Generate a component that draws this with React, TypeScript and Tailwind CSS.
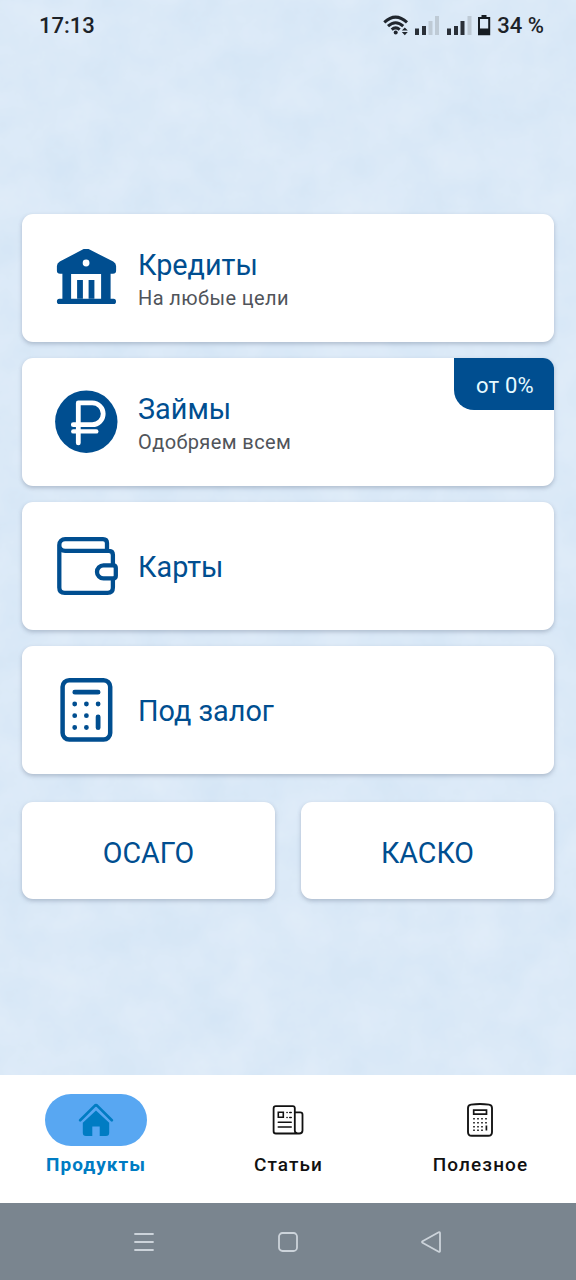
import type { ReactNode } from "react";

function PaperTexture() {
  return (
    <svg className="absolute inset-0 h-full w-full" aria-hidden="true">
      <filter id="paper" x="0" y="0" width="100%" height="100%" colorInterpolationFilters="sRGB">
        <feTurbulence type="fractalNoise" baseFrequency="0.022" numOctaves="5" seed="8" />
        <feColorMatrix values="0.055 0 0 0 0.83  0.032 0 0 0 0.898  0.015 0 0 0 0.962  0 0 0 0 1" />
      </filter>
      <rect width="100%" height="100%" filter="url(#paper)" />
    </svg>
  );
}

function StatusBar() {
  return (
    <header className="flex h-[50px] items-center justify-between pt-0.5 pr-8 pl-[39px] text-[22px] font-medium text-[#1c2228]">
      <span className="leading-none">17:13</span>
      <div className="flex items-center">
        <svg width="115" height="24" viewBox="-1 1 115 24" fill="none">
          <g stroke="#20262e" strokeWidth="3">
            <path d="M1.3 9.4Q12.5-1.2 24 9.4" />
            <path d="M5 13.2q7.6-7 15.2 0" />
            <path d="M8.7 16.6q4-3.5 8 0" />
          </g>
          <circle cx="12.7" cy="19.6" r="2" fill="#20262e" />
          <path d="m21.8 14.4 3 3.2h-6zm0 7.8 3-3.2h-6z" fill="#20262e" />
          <path d="M32 15.5h4V22h-4zM39 13h4v9h-4zM64 15.5h4V22h-4zM71 13h4v9h-4zM77.5 8h4v14h-4z" fill="#2a3038" />
          <path d="M45.5 8h4v14h-4zM52 3h4v19h-4zM84.5 3h4v19h-4z" fill="#becad5" />
          <path d="M98.5 2h5v2h3.7v18.2H95V4h3.5zM97 6v9.5h8.2V6z" fillRule="evenodd" fill="#161c22" />
        </svg>
        <span className="leading-none">34 %</span>
      </div>
    </header>
  );
}

function BankIcon() {
  return (
    <svg width="62" height="58" viewBox="-0.4 1 62 58" fill="#004e90">
      <path
        fillRule="evenodd"
        d="M28.6.8q2.1-1 4.2 0L57.8 13.6q2.9 1.5 2.9 4.5v4.5q0 3.2-3.2 3.2h-2.3v25h3q2.4 0 2.4 2.6T58.2 56H4q-2.5 0-2.5-2.6t2.5-2.6h3v-25H4.7q-3.2 0-3.2-3.2v-4.5q0-3 2.9-4.5zM30.7 11.6a3.4 3.4 0 1 0 0 6.8 3.4 3.4 0 0 0 0-6.8Z"
      />
      <path d="M15.7 26h30v24.8h-30z" fill="#fff" />
      <path d="M21.7 32h5.8v18.8h-5.8zM33.2 32H39v18.8h-5.8z" />
    </svg>
  );
}

function RubleIcon() {
  return (
    <svg width="62" height="62" viewBox="-0.3 0.3 62 62" fill="none" className="overflow-visible">
      <circle cx="31" cy="31" r="31.2" fill="#004e90" />
      <path d="M23 52.2V12.2h14a10.9 10.9 0 0 1 0 21.8H18" stroke="#fff" strokeWidth="4.8" strokeLinecap="round" strokeLinejoin="round" />
      <path d="M18 40.7h23" stroke="#fff" strokeWidth="4.4" strokeLinecap="round" />
    </svg>
  );
}

function WalletIcon() {
  return (
    <svg width="62" height="58" viewBox="-1 0 62 58" fill="none" stroke="#004e90" strokeWidth="4.3" strokeLinejoin="round" className="overflow-visible">
      <path d="M51 14.2V6.1q0-4-4-4H9.2a5.9 5.9 0 0 0-5.9 5.9v42.4q0 5.4 5.4 5.4h42.8q5.4 0 5.4-5.4V41.5M3.3 8a5.9 5.9 0 0 0 5.9 5.9h43.7q4 0 4 4v10.8" />
      <path d="M57.2 28.4H47.5a6.5 6.5 0 0 0 0 13h9.7q2.6 0 2.6-2.6v-7.8q0-2.6-2.6-2.6Z" />
    </svg>
  );
}

function CalculatorIcon() {
  return (
    <svg width="52" height="64" viewBox="-0.4 0 52 64" fill="none" stroke="#004e90" strokeLinecap="round" className="overflow-visible">
      <rect x="2.2" y="2.2" width="47.6" height="59.4" rx="6.6" strokeWidth="4.5" />
      <path d="M14.4 14.2h23.3M37.7 38.8v10.9" strokeWidth="4.8" />
      <path d="M14.3 26h.01M26 26h.01M37.7 26h.01M14.3 37.7h.01M26 37.7h.01M14.3 49.5h.01M26 49.5h.01" strokeWidth="4.8" />
    </svg>
  );
}

interface ProductCardProps {
  icon: ReactNode;
  title: string;
  subtitle?: string;
  badge?: string;
}

function ProductCard({ icon, title, subtitle, badge }: ProductCardProps) {
  return (
    <section className="relative flex h-32 items-center overflow-hidden rounded-[11px] bg-white pl-8 shadow-[0_2px_4px_rgba(65,80,105,0.3)]">
      <div className="flex w-16 shrink-0 items-center justify-center">{icon}</div>
      <div className="pt-0.5 pl-5">
        <h2 className="text-[28.8px] leading-[34px] text-[#004e90]">{title}</h2>
        {subtitle && <p className="mt-1 text-[20px] leading-6 tracking-[0.4px] text-[#50545a]">{subtitle}</p>}
      </div>
      {badge && (
        <span className="absolute top-0 right-0 flex h-[52px] w-[100px] items-center justify-center rounded-bl-[20px] bg-[#004e90] pt-[3px] pl-0.5 text-[22px] tracking-[0.2px] text-[#e6faff]">
          {badge}
        </span>
      )}
    </section>
  );
}

function HomeIcon() {
  return (
    <svg width="36" height="34" viewBox="0 0 36 34" fill="#007cc3">
      <path d="M2.2 17.3 16.4 3.1q1.6-1.6 3.2 0l14.2 14.2" fill="none" stroke="#007cc3" strokeWidth="2.7" strokeLinecap="round" />
      <path d="m18 7.6 13.2 12.2v10q0 3.2-3.2 3.2h-6.3v-9.5h-7.4V33H8q-3.2 0-3.2-3.2v-10z" />
    </svg>
  );
}

function NewsIcon() {
  return (
    <svg width="32" height="30" viewBox="0 0 32 30" fill="none" stroke="#111" strokeWidth="1.8" strokeLinecap="round">
      <path d="M22.8 7.3h5.4q2.3 0 2.3 2.3v15.9q0 3-3.3 3-4.4 0-4.4-3V3.1q0-2-2-2H3.9q-2.3 0-2.3 2.3v22.8q0 2.3 2.3 2.3h23.3" />
      <path d="M6.3 7.3h5v5h-5zM15 7.5h.1M17.8 7.5h1.4M15 12.5h.1M17.8 12.5h1.4M6.3 17.2h12.9M6.3 22h12.9" strokeWidth="1.6" />
    </svg>
  );
}

function SmallCalculatorIcon() {
  return (
    <svg width="26" height="34" viewBox="0 0 26 34" fill="none" stroke="#161616">
      <path d="M1 5q0-3 3-3.4 9-1.2 18 0Q25 2 25 5v24q0 3.8-3.8 3.8H4.8Q1 32.8 1 29z" strokeWidth="1.9" />
      <path d="M6.7 7.2h12.8v4H6.7z" strokeWidth="1.7" />
      <path d="M6.2 15.7h14M6.2 19.7h14M6.2 23.7h10.5M6.2 27.2h10.5" strokeWidth="1.5" strokeDasharray="1.6 2.4" />
      <path d="M19.4 22.5v5" strokeWidth="1.7" />
    </svg>
  );
}

interface NavItemProps {
  icon: ReactNode;
  label: string;
  active?: boolean;
}

function NavItem({ icon, label, active }: NavItemProps) {
  return (
    <a className="flex flex-col items-center pt-[19px]">
      <div className={active ? "flex h-[52px] w-[102px] items-center justify-center rounded-full bg-[#58a7f2]" : "flex h-[52px] w-[102px] items-center justify-center"}>
        {icon}
      </div>
      <span
        className={
          active
            ? "mt-[7px] text-[19px] leading-6 font-bold tracking-[1px] text-[#007cc3]"
            : "mt-[7px] pl-px text-[19px] leading-6 font-medium tracking-[1.1px] text-[#111]"
        }
      >
        {label}
      </span>
    </a>
  );
}

export default function App() {
  return (
    <div className="relative h-[1280px] w-[576px] overflow-hidden bg-[#dae9f8] font-['Roboto',sans-serif]">
      <PaperTexture />
      <div className="relative flex h-full flex-col">
        <StatusBar />

        <main className="flex flex-1 flex-col gap-4 px-[22px] pt-[163.5px]">
          <ProductCard icon={<BankIcon />} title="Кредиты" subtitle="На любые цели" />
          <ProductCard icon={<RubleIcon />} title="Займы" subtitle="Одобряем всем" badge="от 0%" />
          <ProductCard icon={<WalletIcon />} title="Карты" />
          <ProductCard icon={<CalculatorIcon />} title="Под залог" />

          <div className="mt-[12.5px] grid grid-cols-2 gap-[26px]">
            {["ОСАГО", "КАСКО"].map((name) => (
              <button
                key={name}
                className="h-[97px] rounded-[11px] bg-white pt-1.5 text-[28.6px] text-[#004e90] shadow-[0_2px_4px_rgba(65,80,105,0.3)]"
              >
                {name}
              </button>
            ))}
          </div>
        </main>

        <nav className="grid h-32 grid-cols-3 bg-white">
          <NavItem icon={<HomeIcon />} label="Продукты" active />
          <NavItem icon={<NewsIcon />} label="Статьи" />
          <NavItem icon={<SmallCalculatorIcon />} label="Полезное" />
        </nav>

        <footer className="flex h-[77px] items-center justify-center gap-[122px] bg-[#7a858f]">
          <svg width="22" height="22" viewBox="0 0 22 22" stroke="#ccd3da" strokeWidth="1.8" strokeLinecap="round">
            <path d="M2 3h18M2 11h18M2 19h18" />
          </svg>
          <svg width="22" height="22" viewBox="0 0 22 22" fill="none" stroke="#ccd3da" strokeWidth="1.8">
            <rect x="2" y="2" width="18" height="18" rx="3.5" />
          </svg>
          <svg width="22" height="22" viewBox="0.5 0 22 22" fill="none" stroke="#ccd3da" strokeWidth="1.8" strokeLinejoin="round">
            <path d="m2 10.3 16.2-9q1.3-.5 1.3.9v17.7q0 1.4-1.3.8L2 11.7q-1-.7 0-1.4Z" />
          </svg>
        </footer>
      </div>
    </div>
  );
}
